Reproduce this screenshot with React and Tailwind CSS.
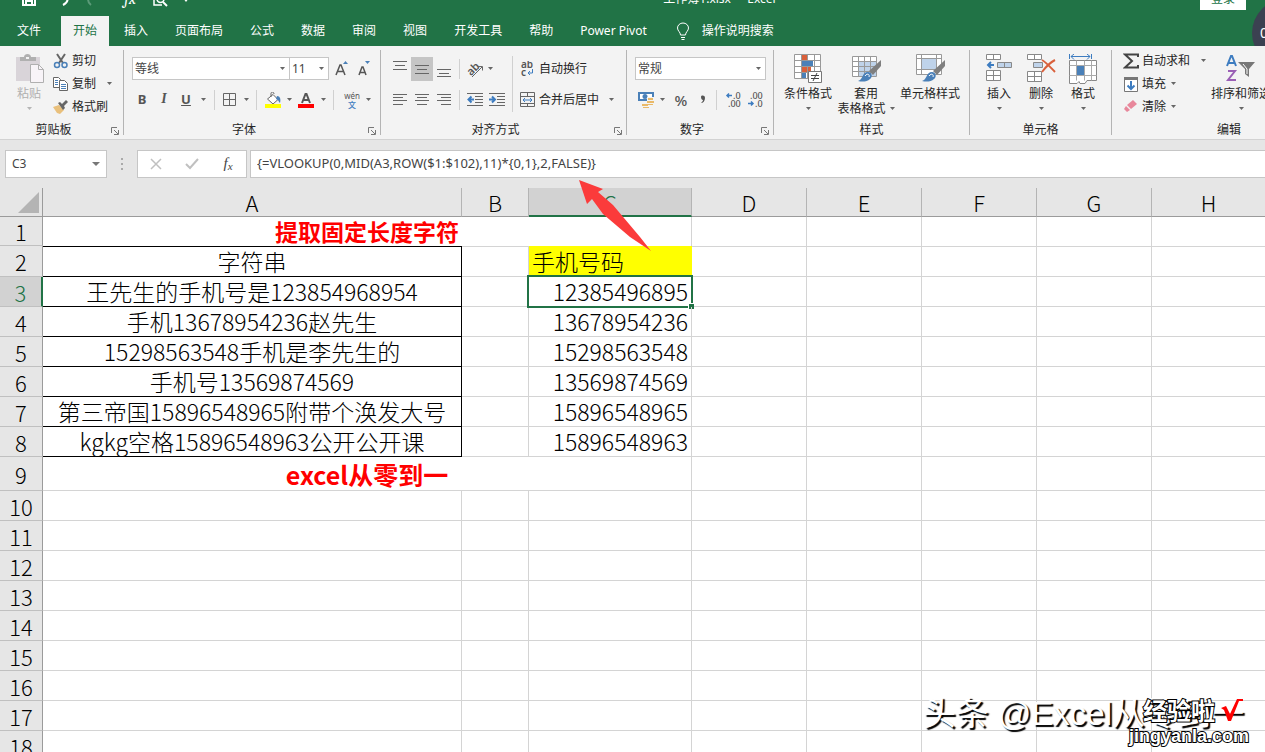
import React from "react";

const tabs = ["插入", "页面布局", "公式", "数据", "审阅", "视图", "开发工具", "帮助", "Power Pivot"];

const columns = ["A", "B", "C", "D", "E", "F", "G", "H"];

const rows = [
  { n: 2, a: "字符串", c: "手机号码" },
  { n: 3, a: "王先生的手机号是123854968954", c: "12385496895" },
  { n: 4, a: "手机13678954236赵先生", c: "13678954236" },
  { n: 5, a: "15298563548手机是李先生的", c: "15298563548" },
  { n: 6, a: "手机号13569874569", c: "13569874569" },
  { n: 7, a: "第三帝国15896548965附带个涣发大号", c: "15896548965" },
  { n: 8, a: "kgkg空格15896548963公开公开课", c: "15896548963" },
];

const emptyRows = [10, 11, 12, 13, 14, 15, 16, 17, 18];

const Caret = ({ light }) => (
  <svg width="5" height="3" viewBox="0 0 5 3" className={light ? "shrink-0 text-[#b5b5b5]" : "shrink-0 text-[#666]"}>
    <path d="M0 0h5L2.5 3z" fill="currentColor" />
  </svg>
);

const CaretButton = ({ label, className }) => (
  <button aria-label={label} className={`flex h-6 items-center justify-center ${className}`}>
    <Caret />
  </button>
);

const Icon = ({ w = 16, h = 16, children }) => (
  <svg width={w} height={h} viewBox={`0 0 ${w} ${h}`} fill="none" className="shrink-0">
    {children}
  </svg>
);

const Lines = ({ d }) => (
  <Icon>
    <path d={d} stroke="#666" />
  </Icon>
);

const Divider = ({ className }) => <div className={`h-5 w-px shrink-0 bg-[#d0d0d0] ${className}`} />;

const Launcher = () => (
  <button aria-label="更多设置" className="flex w-4 items-center justify-end pr-1 pt-1">
    <Icon w={8} h={8}>
      <path d="M.5 6V.5H6M3 3l4 4M7.5 3v4.5H3" stroke="#777" />
    </Icon>
  </button>
);

const Group = ({ title, launcher, last, className, children }) => (
  <>
    <section className={`flex shrink-0 flex-col ${className}`}>
      <div className="flex h-[74px]">{children}</div>
      <div className="flex h-[18px]">
        <h2 className="flex-1 text-center leading-5">{title}</h2>
        {launcher && <Launcher />}
      </div>
    </section>
    {!last && <div className="my-1 w-px shrink-0 bg-[#b4b4b4]" />}
  </>
);

const Tool = ({ label, className, children }) => (
  <button aria-label={label} className={`flex h-6 shrink-0 items-center justify-center ${className}`}>
    {children}
  </button>
);

const SmallButton = ({ icon, text, caret, wide }) => (
  <button className="flex h-[23px] items-center gap-[3px] whitespace-nowrap">
    <span className="flex w-4 justify-center">{icon}</span>
    <span>{text}</span>
    {caret && (
      <span className={wide ? "pl-2" : "pl-0.5"}>
        <Caret />
      </span>
    )}
  </button>
);

const BigButton = ({ icon, text, second, light, className }) => (
  <button className={`flex shrink-0 flex-col items-center whitespace-nowrap pt-2 leading-[15px] ${className}`}>
    <span className="flex h-8 items-start">{icon}</span>
    <span className={light ? "text-[#b0b0b0]" : ""}>{text}</span>
    <span className="flex h-[15px] items-center gap-1">
      {second}
      <Caret light={light} />
    </span>
  </button>
);

const Combo = ({ id, label, value, className }) => (
  <div className={`flex h-[23px] items-center border border-[#c6c6c6] bg-white pr-1 ${className}`}>
    <label htmlFor={id} className="sr-only">{label}</label>
    <select id={id} defaultValue={value} className="min-w-0 flex-1 appearance-none bg-transparent pl-0.5 text-[#444] outline-none">
      <option>{value}</option>
    </select>
    <Caret />
  </div>
);

const Brush = () => (
  <>
    <path d="M30 6v6l-8 9-4-4z" fill="#7f7f7f" />
    <path d="M7 27c5-1 4-9 10-9 4 0 5 5 2 7-3 3-8 3-12 2z" fill="#4a80b8" />
    <path d="M14 22c2-3 5-2 4 1" stroke="#fff" />
  </>
);

const Header = () => (
  <header className="relative overflow-hidden bg-[#217346] text-white">
    <div className="flex h-4 items-end">
      <div className="mb-px grid h-8 flex-1 shrink-0 grid-cols-[1fr_auto_1fr] items-center">
        <div className="flex items-center pl-[22px]">
          <Tool label="保存" className="w-3.5">
            <Icon w={14} h={14}>
              <path d="M1 1h12v12H1zM3.500 1v5h7V1M4 13V9h6v4" stroke="#fff" strokeWidth="2" />
            </Icon>
          </Tool>
          <Tool label="撤消" className="ml-5 w-4">
            <Icon>
              <path d="M3 5h5c5 0 5 6-1 9" stroke="#fff" strokeWidth="2" />
            </Icon>
          </Tool>
          <Tool label="恢复" className="ml-3 w-4">
            <Icon>
              <path d="M13 5H8c-5 0-5 6-1 9" stroke="#5b9a78" strokeWidth="2" />
            </Icon>
          </Tool>
          <Tool label="插入函数" className="ml-5 w-5 font-serif text-base italic">fx</Tool>
          <Tool label="打印预览" className="ml-3 w-4">
            <Icon>
              <path d="M11 4V1H2v13h8" stroke="#fff" strokeWidth="1.500" />
              <circle cx="8.500" cy="8" r="3.500" stroke="#fff" strokeWidth="1.500" />
              <path d="M11 11l4 4" stroke="#fff" strokeWidth="2" />
            </Icon>
          </Tool>
          <Tool label="自定义快速访问工具栏" className="ml-2.5 w-4">
            <Icon w={8} h={6}>
              <path d="M1 2h6L4 6z" fill="#fff" />
            </Icon>
          </Tool>
        </div>
        <h1 className="pl-[174px] text-xs">工作簿1.xlsx&nbsp; -&nbsp; Excel</h1>
        <div className="flex justify-end pr-[19px]">
          <button className="h-[22px] w-[46px] bg-white text-[#217346] leading-[20px]">登录</button>
        </div>
      </div>
    </div>
    <nav className="flex h-[30px] items-stretch gap-[3px] pl-[5px]">
      <button className="mr-[5px] px-3">文件</button>
      <button className="bg-[#f3f3f3] px-3 text-[#217346]">开始</button>
      {tabs.map((t) => (
        <button key={t} className="whitespace-nowrap px-3">{t}</button>
      ))}
      <button className="ml-3.5 flex items-center gap-3 whitespace-nowrap">
        <Icon w={14} h={18}>
          <path d="M4.500 13c0-3-3-4-3-7a5.500 5 0 0 1 11 0c0 3-3 4-3 7zM5 15.500h4M5.500 17.500h3" stroke="#fff" />
        </Icon>
        操作说明搜索
      </button>
    </nav>
    <div className="absolute -right-[55px] -top-px flex size-[68px] items-center bg-[#3b4151] pl-2 text-sm rounded-full">0</div>
  </header>
);

const Ribbon = () => (
  <div className="flex h-[94px] overflow-hidden border-b border-[#d2d2d2] bg-[#f3f3f3] text-[#262626]">
    <Group title="剪贴板" launcher className="w-[123px]">
      <BigButton
        className="ml-[11px] w-9"
        light
        text="粘贴"
        icon={
          <Icon w={30} h={30}>
            <path d="M2 3h24v24H2z" fill="#d9d4d9" />
            <path d="M6 7V3h4c0-4 7-4 7 0h5v4z" fill="#b0b0b0" />
            <path d="M12 3h3v2h-3z" fill="#f3f3f3" />
            <path d="M16.500 10.500h8l5 5v13h-13z" fill="#f8f4f8" stroke="#b0b0b0" />
            <path d="M24.500 10.500v5h5" stroke="#b0b0b0" />
          </Icon>
        }
      />
      <div className="ml-1.5 flex flex-col pt-[3px]">
        <SmallButton
          text="剪切"
          icon={
            <Icon>
              <path d="M4 1l6 9M12 1L6 10" stroke="#666" strokeWidth="2" />
              <circle cx="4" cy="12" r="2.500" stroke="#4a80b8" strokeWidth="1.500" />
              <circle cx="11.500" cy="12" r="2.500" stroke="#4a80b8" strokeWidth="1.500" />
            </Icon>
          }
        />
        <SmallButton
          text="复制"
          caret
          wide
          icon={
            <Icon>
              <path d="M.5 1.500h5l2 2v8h-7z" fill="#fff" stroke="#666" />
              <path d="M2 4.500h3M2 6.500h3M2 8.500h3" stroke="#4a80b8" />
              <path d="M6.500 4.500h5l3 3v7h-8z" fill="#fff" stroke="#666" />
              <path d="M8 8.500h5M8 10.500h5M8 12.500h5" stroke="#4a80b8" />
            </Icon>
          }
        />
        <SmallButton
          text="格式刷"
          icon={
            <Icon>
              <path d="M0 8l6-2 5 5-4 4-3-1z" fill="#e9c07c" />
              <path d="M5 4l2-1 2 2 4-4 2 2-4 4 1 2-2 2z" fill="#666" />
            </Icon>
          }
        />
      </div>
    </Group>

    <Group title="字体" launcher className="w-[256px]">
      <div className="flex flex-col pl-2 pt-[7px]">
        <div className="flex h-[31px] items-center">
          <Combo id="font" label="字体" value="等线" className="w-[158px]" />
          <Combo id="size" label="字号" value="11" className="-ml-px w-10" />
          <Tool label="增大字号" className="ml-0.5 w-[22px]">
            <Icon>
              <path d="M2 14L6 4h1l4 10M3.500 10.500h6" stroke="#555" strokeWidth="1.500" />
              <path d="M9 3h5l-2.500-3z" fill="#4a80b8" />
            </Icon>
          </Tool>
          <Tool label="减小字号" className="w-[22px]">
            <Icon>
              <path d="M3 14l3-8h1l3 8M4 11.500h5" stroke="#555" strokeWidth="1.500" />
              <path d="M9 0h5l-2.500 3z" fill="#4a80b8" />
            </Icon>
          </Tool>
        </div>
        <div className="flex h-[31px] items-center text-[#555]">
          <Tool label="加粗" className="w-5 text-[13px] font-bold">B</Tool>
          <Tool label="倾斜" className="w-6 font-['Liberation_Serif',serif] text-[14px] font-bold italic">I</Tool>
          <Tool label="下划线" className="w-5 text-[13px] font-bold underline">U</Tool>
          <CaretButton label="下划线样式" className="w-3.5" />
          <Divider className="mx-1" />
          <Tool label="边框" className="w-[22px]">
            <Icon w={14} h={14}>
              <path d="M.5.5h12v12H.5zM6.500 .5v12M.5 6.500h12" stroke="#666" />
            </Icon>
          </Tool>
          <CaretButton label="边框样式" className="w-[11px]" />
          <Divider className="mx-1" />
          <Tool label="填充颜色" className="w-6">
            <Icon>
              <path d="M8 2.500l5 5-5 4.500-5.500-5z" fill="#fff" stroke="#666" />
              <path d="M6 5V1.500C6-.5 9-.5 9 2" stroke="#666" />
              <path d="M12 4c3 0 4 3 3 7-2-2-1-3-4-4z" fill="#4a80b8" />
              <path d="M0 12h16v4H0z" fill="#ff0" />
            </Icon>
          </Tool>
          <CaretButton label="选择填充颜色" className="w-2" />
          <Tool label="字体颜色" className="w-[26px]">
            <Icon>
              <path d="M4 11L7.500 2h1L12 11M5 8h6" stroke="#555" strokeWidth="2" />
              <path d="M0 12h16v4H0z" fill="#f00" />
            </Icon>
          </Tool>
          <CaretButton label="选择字体颜色" className="w-2" />
          <Divider className="mx-[6px]" />
          <Tool label="拼音" className="w-6 flex-col text-[8px] leading-[9px]">
            <span>wén</span>
            <span className="font-medium text-[#3d7cc0]">文</span>
          </Tool>
          <CaretButton label="拼音选项" className="w-2" />
        </div>
      </div>
    </Group>

    <Group title="对齐方式" launcher className="w-[245px]">
      <div className="flex flex-col pl-2 pt-[7px]">
        <div className="flex h-[31px] items-center">
          <Tool label="顶端对齐" className="w-[22px]"><Lines d="M1 .5h14M3 4.500h10M1 8.500h14" /></Tool>
          <Tool label="垂直居中" className="w-[22px] bg-[#c5c5c5]"><Lines d="M1 4.500h14M3 8.500h10M1 12.500h14" /></Tool>
          <Tool label="底端对齐" className="w-[22px]"><Lines d="M1 8.500h14M3 12.500h10M1 15.500h14" /></Tool>
          <Divider className="mx-1" />
          <Tool label="方向" className="w-[22px]">
            <Icon>
              <text x="0" y="12" fontSize="11" fontWeight="600" fill="#555" transform="rotate(-45 6 9)">ab</text>
              <path d="M5 16L15 6M11 5.500h4.500v4" stroke="#666" />
            </Icon>
          </Tool>
          <CaretButton label="方向选项" className="w-2" />
        </div>
        <div className="flex h-[31px] items-center">
          <Tool label="左对齐" className="w-[22px]"><Lines d="M1 2.500h14M1 5.500h10M1 8.500h14M1 12.500h10" /></Tool>
          <Tool label="居中" className="w-[22px]"><Lines d="M1 2.500h14M3 5.500h10M1 8.500h14M3 12.500h10" /></Tool>
          <Tool label="右对齐" className="w-[22px]"><Lines d="M1 2.500h14M5 5.500h10M1 8.500h14M5 12.500h10" /></Tool>
          <Divider className="mx-1" />
          <Tool label="减少缩进量" className="w-[22px]">
            <Icon>
              <path d="M0 1.500h16M8 4.500h8M8 7.500h8M8 10.500h8M0 13.500h16" stroke="#666" />
              <path d="M7 7.500H2M4.500 4.500l-3 3 3 3" stroke="#3d7cc0" strokeWidth="2" />
            </Icon>
          </Tool>
          <Tool label="增加缩进量" className="w-[22px]">
            <Icon>
              <path d="M0 1.500h16M8 4.500h8M8 7.500h8M8 10.500h8M0 13.500h16" stroke="#666" />
              <path d="M0 7.500h5M3 4.500l3 3-3 3" stroke="#3d7cc0" strokeWidth="2" />
            </Icon>
          </Tool>
        </div>
      </div>
      <div className="ml-1 mt-[10px] h-14 w-px bg-[#d0d0d0]" />
      <div className="flex flex-col pl-1.5 pt-[7px]">
        <button className="flex h-[31px] items-center gap-1">
          <Icon>
            <text x="2" y="7" fontSize="10" fontWeight="600" fill="#555">ab</text>
            <text x="2" y="15" fontSize="10" fontWeight="600" fill="#555">c</text>
            <path d="M13.500 8v4H9M11 10l-2 2 2 2" stroke="#3d7cc0" />
          </Icon>
          自动换行
        </button>
        <button className="flex h-[31px] items-center gap-1 whitespace-nowrap">
          <Icon>
            <path d="M1.500.5h14v14h-14zM1.500 4.500h14M1.500 11.500h14M8.500.5v4M8.500 11.500v3" stroke="#666" />
            <path d="M4 8h9M6 6L4 8l2 2M11 6l2 2-2 2" stroke="#3d7cc0" />
          </Icon>
          合并后居中
          <span className="pl-1.5"><Caret /></span>
        </button>
      </div>
    </Group>

    <Group title="数字" launcher className="w-[146px]">
      <div className="flex flex-col pl-2 pt-[7px]">
        <div className="flex h-[31px] items-center">
          <Combo id="format" label="数字格式" value="常规" className="w-[131px]" />
        </div>
        <div className="flex h-[31px] items-center text-[#555]">
          <Tool label="会计数字格式" className="w-[22px]">
            <Icon>
              <path d="M0 0h16v9H0z" fill="#4a80b8" />
              <path d="M2 2h12v5H2z" fill="#fff" />
              <circle cx="7" cy="4.500" r="2.500" fill="#4a80b8" />
              <path d="M9 5h7v6H9zM4 11h7v5H4z" fill="#f3f3f3" />
              <path d="M10 6h5v2h-5zM9 9h7v2H9zM4 12h6v2H4zM10 12h5v1h-5zM5 15h6v1H5z" fill="#e9b968" />
            </Icon>
          </Tool>
          <CaretButton label="货币选项" className="w-2.5" />
          <Tool label="百分比样式" className="w-7 text-[15px] font-medium leading-4">%</Tool>
          <Tool label="千位分隔样式" className="w-4">
            <Icon w={6} h={10}>
              <path d="M1 2c0-2 4-2 4 1S3 8 1 8c1-1 2-2 2-3-1 0-2-1-2-3z" fill="#555" />
            </Icon>
          </Tool>
          <Divider className="mx-[5px]" />
          <Tool label="增加小数位数" className="w-[22px]">
            <Icon>
              <path d="M7 3.500H2M4 1.500l-2 2 2 2" stroke="#3d7cc0" strokeWidth="1.500" />
              <text x="8" y="7" fontSize="9" fontWeight="500" fill="#555">.0</text>
              <text x="3" y="15" fontSize="9" fontWeight="500" fill="#555">.00</text>
            </Icon>
          </Tool>
          <Tool label="减少小数位数" className="w-[22px]">
            <Icon>
              <text x="3" y="7" fontSize="9" fontWeight="500" fill="#555">.00</text>
              <path d="M1 11.500h5M4 9.500l2 2-2 2" stroke="#3d7cc0" strokeWidth="1.500" />
              <text x="8" y="15" fontSize="9" fontWeight="500" fill="#555">.0</text>
            </Icon>
          </Tool>
        </div>
      </div>
    </Group>

    <Group title="样式" className="w-[195px]">
      <BigButton
        className="ml-2 w-[52px]"
        text="条件格式"
        icon={
          <Icon w={28} h={30}>
            <path d="M.5.5h26v24H.5z" fill="#fff" />
            <path d="M8 1h5v5H8zM8 13h9v5H8z" fill="#d9603b" />
            <path d="M.5.5h26v24H.5zM7.500 .5v24M13.500.5v24M20.500 .5v24M.5 6.500h26M.5 12.500h26M.5 18.500h26" stroke="#999" />
            <path d="M8 7h11v5H8zM8 19h4v5H8z" fill="#4a80b8" />
            <path d="M14.500 17.500h13v11h-13z" fill="#fff" stroke="#777" />
            <path d="M17 21.500h8M17 24.500h8M23 19l-4 8" stroke="#444" />
          </Icon>
        }
      />
      <BigButton
        className="w-16"
        text="套用"
        second="表格格式"
        icon={
          <Icon w={30} h={30}>
            <path d="M1.500 2.500h24v20h-24z" fill="#fff" />
            <path d="M7 7h18v15H7z" fill="#bfd3ea" />
            <path d="M1.500 2.500h24v20h-24zM7.500 2.500v20M13.500 2.500v20M19.500 2.500v20M1.500 7.500h24M1.500 12.500h24M1.500 17.500h24" stroke="#999" />
            <Brush />
          </Icon>
        }
      />
      <BigButton
        className="w-16"
        text="单元格样式"
        icon={
          <Icon w={30} h={30}>
            <path d="M1.500.5h25v20h-25z" fill="#fff" />
            <path d="M7 5h14v11H7z" fill="#bfd3ea" />
            <path d="M1.500.5h25v20h-25zM6.500.5v20M21.500.5v20M1.500 4.500h25M1.500 15.500h25" stroke="#999" />
            <Brush />
          </Icon>
        }
      />
    </Group>

    <Group title="单元格" className="w-[141px]">
      <BigButton
        className="ml-2 w-[42px]"
        text="插入"
        icon={
          <Icon w={28} h={30}>
            <path d="M1.500.5h14v5h-14zM8.500.5v5M1.500 16.500h14v10h-14zM8.500 16.500v10M1.500 21.500h14" fill="#fff" stroke="#888" />
            <path d="M12.500 8.500h14v5h-14zM19.500 8.500v5" fill="#bfd3ea" stroke="#888" />
            <path d="M9 11H3M6 8l-3 3 3 3" stroke="#3d7cc0" strokeWidth="2" />
          </Icon>
        }
      />
      <BigButton
        className="w-[42px]"
        text="删除"
        icon={
          <Icon w={30} h={30}>
            <path d="M1.500.5h14v5h-14zM8.500.5v5M1.500 17.500h14v10h-14zM8.500 17.500v10M1.500 22.500h14" fill="#fff" stroke="#888" />
            <path d="M7.500 8.500h9v5h-9z" fill="#bfd3ea" stroke="#888" />
            <path d="M16 6c5 3 9 8 13 12M29 6c-6 3-10 8-13 12" stroke="#d9603b" strokeWidth="2" />
          </Icon>
        }
      />
      <BigButton
        className="w-[42px]"
        text="格式"
        icon={
          <Icon w={28} h={32}>
            <path d="M.5 0v5M22.500 0v5M2 2.500h19M5 0L2 2.500l3 3M18 0l3 2.500-3 3" stroke="#3d7cc0" />
            <path d="M.5 6.500h27v20H18l-2 3H11l-1-2-2 2H.5z" fill="#fff" stroke="#888" />
            <path d="M7.500 6.500v20M15.500 6.500v20M22.500 6.500v20M.5 11.500h27M.5 21.500h27" stroke="#aaa" />
            <path d="M8 12h7v9H8z" fill="#4a80b8" />
          </Icon>
        }
      />
    </Group>

    <Group title="编辑" last className="w-[234px]">
      <div className="ml-[11px] flex flex-col pt-[3px]">
        <SmallButton
          text="自动求和"
          caret
          wide
          icon={
            <Icon>
              <path d="M15 4V1.500H2L9 8l-7 6.500h13V12" stroke="#444" strokeWidth="2" />
            </Icon>
          }
        />
        <SmallButton
          text="填充"
          caret
          icon={
            <Icon>
              <path d="M1.500 1.500h13v14h-13z" fill="#fff" stroke="#777" />
              <path d="M1 1h14v3H1z" fill="#777" />
              <path d="M8 5v8M4.500 9.500L8 13l3.500-3.500" stroke="#3d7cc0" strokeWidth="2" />
            </Icon>
          }
        />
        <SmallButton
          text="清除"
          caret
          icon={
            <Icon>
              <path d="M10 1l4 4-6 5-4-4z" fill="#e8879b" />
              <path d="M3 7l4 4-3 2-3-3z" fill="#e8879b" />
            </Icon>
          }
        />
      </div>
      <BigButton
        className="ml-0.5 w-[66px]"
        text="排序和筛选"
        icon={
          <Icon w={30} h={30}>
            <path d="M1 12L5 2h1l4 10M2.500 9h6" stroke="#3d7cc0" strokeWidth="2" />
            <path d="M2 17h7l-7 9h8" stroke="#9a5fb5" strokeWidth="2" />
            <path d="M12 8h17l-6 7v8l-4-3v-5z" fill="#777" />
            <path d="M17 10l4 5v5" stroke="#fff" />
          </Icon>
        }
      />
    </Group>
  </div>
);

const FormulaBar = () => (
  <div className="flex h-12 items-start bg-[#e6e6e6] pl-[5px] pt-[10px] text-[#444]">
    <div className="flex h-7 w-[102px] shrink-0 items-center border border-[#c6c6c6] bg-white px-1.5">
      <input aria-label="名称框" defaultValue="C3" className="min-w-0 flex-1 bg-transparent outline-none" />
      <svg width="8" height="4" viewBox="0 0 8 4">
        <path d="M0 0h8L4 4z" fill="#777" />
      </svg>
    </div>
    <div className="flex h-7 w-[30px] shrink-0 items-center justify-center">
      <svg width="2" height="12" viewBox="0 0 2 12">
        <path d="M0 0h2v2H0zM0 5h2v2H0zM0 10h2v2H0z" fill="#aaa" />
      </svg>
    </div>
    <div className="flex h-7 w-[110px] shrink-0 items-center justify-around border border-[#c6c6c6] bg-white">
      <Tool label="取消" className="w-4">
        <Icon w={12} h={12}>
          <path d="M1 1l10 10M11 1L1 11" stroke="#c0c0c0" strokeWidth="1.500" />
        </Icon>
      </Tool>
      <Tool label="输入" className="w-4">
        <Icon w={14} h={12}>
          <path d="M1 6l4 4 8-9" stroke="#c0c0c0" strokeWidth="2" />
        </Icon>
      </Tool>
      <Tool label="插入函数" className="w-4 font-['Liberation_Serif',serif] text-[15px] italic">
        f<span className="pt-1 text-[11px]">x</span>
      </Tool>
    </div>
    <input
      aria-label="编辑栏"
      defaultValue="{=VLOOKUP(0,MID(A3,ROW($1:$102),11)*{0,1},2,FALSE)}"
      className="ml-[3px] h-7 min-w-0 flex-1 border border-r-0 border-[#c6c6c6] bg-white pb-0.5 pl-1.5 text-[13px] outline-none"
    />
  </div>
);

const RowHeader = ({ n, active }) => (
  <th
    scope="row"
    className={
      active
        ? "border-b border-r-2 border-b-[#c0c0c0] border-r-[#217346] bg-[#d2d2d2] font-light text-[#217346]"
        : "border-b border-r border-b-[#c0c0c0] border-r-[#9b9b9b] bg-[#e6e6e6] font-light"
    }
  >
    {n}
  </th>
);

const Blank = ({ count, className }) =>
  Array.from({ length: count }, (_, i) => (
    <td key={i} className={`border-r border-[#d4d4d4] last:border-r-0 ${className}`} />
  ));

const Sheet = () => (
  <table className="w-full table-fixed border-separate border-spacing-0 bg-white font-['Noto_Sans_CJK_SC',sans-serif] text-[22px] font-light leading-[26px] text-black">
    <colgroup>
      <col className="w-[43px]" />
      <col className="w-[419px]" />
      <col className="w-[67px]" />
      <col className="w-[163px]" />
      <col className="w-[115px]" />
      <col className="w-[115px]" />
      <col className="w-[115px]" />
      <col className="w-[115px]" />
      <col />
    </colgroup>
    <thead>
      <tr className="h-[29px] bg-[#e6e6e6]">
        <th className="border-b border-r border-b-[#9b9b9b] border-r-[#9b9b9b]">
          <svg width="21" height="21" viewBox="0 0 21 21" className="ml-auto mr-[3px]">
            <path d="M21 0v21H0z" fill="#b4b4b4" />
          </svg>
        </th>
        {columns.map((c) => (
          <th
            key={c}
            scope="col"
            className={
              c === "C"
                ? "border-b-2 border-r border-b-[#217346] border-r-[#b4b4b4] bg-[#d2d2d2] font-light text-[#217346]"
                : "border-b border-r border-b-[#9b9b9b] border-r-[#b4b4b4] font-light last:border-r-0"
            }
          >
            {c}
          </th>
        ))}
      </tr>
    </thead>
    <tbody>
      <tr className="h-[29px]">
        <RowHeader n={1} />
        <td colSpan={3} className="border-r border-[#d4d4d4] pb-0.5 text-center text-[23px] font-bold text-[#f00]">提取固定长度字符</td>
        <Blank count={5} />
      </tr>
      {rows.map(({ n, a, c }) =>
        n === 2 ? (
          <tr key={n} className="h-[31px]">
            <RowHeader n={n} />
            <td className="border-y border-r border-black pb-0.5 text-center text-[23px]">{a}</td>
            <Blank count={1} className="border-y" />
            <td className="border-y border-r border-[#ff0] bg-[#ff0] pb-0.5 pl-[3px] text-[23px]">{c}</td>
            <Blank count={5} className="border-y" />
          </tr>
        ) : (
          <tr key={n} className="h-[30px]">
            <RowHeader n={n} active={n === 3} />
            <td className="whitespace-nowrap border-b border-r border-black pb-0.5 text-center text-[23px]">{a}</td>
            <Blank count={1} className="border-b" />
            <td className="relative border-b border-r border-[#d4d4d4] pb-0.5 pr-[3px] text-right text-[23px]">
              {c}
              {n === 3 && (
                <>
                  <span className="absolute -inset-0.5 border-2 border-[#217346]" />
                  <span className="absolute -bottom-[3px] -right-[3px] size-1.5 border-l border-t border-white bg-[#217346]" />
                </>
              )}
            </td>
            <Blank count={5} className="border-b" />
          </tr>
        )
      )}
      <tr className="h-[34px]">
        <RowHeader n={9} />
        <td colSpan={3} className="border-b border-r border-[#d4d4d4] text-center text-[25px] font-bold text-[#f00]">excel从零到一</td>
        <Blank count={5} className="border-b" />
      </tr>
      {emptyRows.map((n) => (
        <tr key={n} className="h-[30px]">
          <RowHeader n={n} />
          <Blank count={8} className="border-b" />
        </tr>
      ))}
    </tbody>
  </table>
);

const outline = "[paint-order:stroke_fill] [-webkit-text-stroke:2px_#000]";

const App = () => (
  <div className="relative h-screen overflow-hidden bg-white font-['Noto_Sans','Noto_Sans_CJK_SC',sans-serif] text-xs">
    <Header />
    <Ribbon />
    <FormulaBar />
    <Sheet />

    {/* arrow pointing at the formula */}
    <svg width="72" height="71" viewBox="0 0 72 71" className="absolute left-[579px] top-[180px]">
      <path d="M0 0l24 9-5 3 15 13 27 32 11 14-21-14-27-23-11-15-5 5z" fill="#fb3b3b" />
    </svg>

    <p className="absolute bottom-4 right-[21px] whitespace-nowrap font-['Liberation_Sans','Noto_Sans_CJK_SC',sans-serif] text-[33px] leading-[44px] text-white [text-shadow:2px_2px_1px_#000]">
      头条 @Excel从零到一
    </p>
    <div className="absolute bottom-1.5 right-4 flex flex-col items-end font-bold text-white">
      <div className="flex items-center gap-1.5 pr-1.5 leading-[26px]">
        <span className={`font-['Noto_Sans_CJK_SC',sans-serif] text-2xl ${outline}`}>经验啦</span>
        <svg width="22" height="24" viewBox="0 0 22 24">
          <path d="M0 10l5-2 4 8L16 1h6v2h-4L10 23H7L3 12z" fill="#f00" />
        </svg>
      </div>
      <span className={`font-['Liberation_Sans',sans-serif] text-lg leading-5 ${outline}`}>jingyanla.com</span>
    </div>
  </div>
);

export default App;
